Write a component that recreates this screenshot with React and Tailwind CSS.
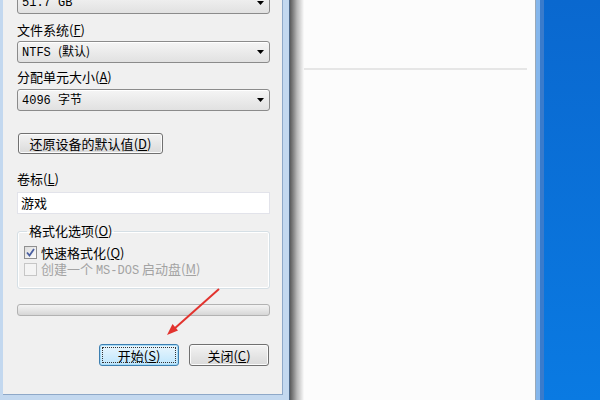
import React from "react";

const cjk = { fontFamily: '"Noto Sans CJK SC", "Liberation Sans", sans-serif' };
const mono = { fontFamily: '"Liberation Mono", "Noto Sans CJK SC", monospace' };

function Arrow() {
  return (
    <svg width="7" height="4" viewBox="0 0 7 4" className="shrink-0">
      <polygon points="0,0 7,0 3.5,4" fill="#000" />
    </svg>
  );
}

function Key({ k }) {
  return (
    <span>
      (<span className="underline">{k}</span>)
    </span>
  );
}

function Select({ children }) {
  return (
    <div className="flex items-center h-[22px] border border-[#8b8b8b] rounded-[3px] bg-linear-to-b from-[#f5f5f5] to-[#e1e1e1] pl-[4px] pr-[5px] text-[12px] text-black shadow-[inset_0_1px_0_#ffffff]">
      <span className="flex-1 leading-none" style={mono}>{children}</span>
      <Arrow />
    </div>
  );
}

function Label({ children, className }) {
  return <div className={"text-[13px] leading-[16px] text-black " + (className || "")}>{children}</div>;
}

export default function App() {
  return (
    <div className="relative w-[600px] h-[400px] overflow-hidden flex bg-[#fcfcfc]" style={cjk}>
      {/* Dialog frame */}
      <div className="w-[290px] h-full bg-[#c3d8ef] pl-[3px] pr-[6px] pb-[5px] border-r border-r-[#4d6786] shrink-0">
        <div className="h-full bg-[#f0f0f0] border-r border-b border-[#8ea8c8] pl-[14px] pr-[12px] flex flex-col">
          <div className="-mt-[8px]">
            <Select>51.7 GB</Select>
          </div>
          <Label className="mt-[8px]">文件系统<Key k="F" /></Label>
          <div className="mt-[3px]">
            <Select>
              NTFS <span style={cjk}>(默认)</span>
            </Select>
          </div>
          <Label className="mt-[6px]">分配单元大小<Key k="A" /></Label>
          <div className="mt-[4px]">
            <Select>
              4096 <span style={cjk}>字节</span>
            </Select>
          </div>

          <div className="mt-[22px] flex">
            <button className="ml-[1px] w-[145px] h-[21px] border border-[#707070] rounded-[3px] bg-linear-to-b from-[#f3f3f3] to-[#dadada] text-[13px] leading-none text-black shadow-[inset_0_0_0_1px_#fbfbfb]">
              还原设备的默认值<Key k="D" />
            </button>
          </div>

          <Label className="mt-[17px]">卷标<Key k="L" /></Label>
          <div className="mt-[5px] h-[22px] bg-white border border-[#e2e3ea] flex items-center pl-[3px] text-[13px] text-black">
            游戏
          </div>

          <fieldset className="mt-[9px] border border-[#d5dfe5] rounded-[3px] pl-[7px] pr-[2px] pb-[4px] h-[66px] shadow-[inset_0_0_0_1px_#ffffff]">
            <legend className="ml-[2px] px-[2px] text-[13px] leading-[16px] text-black">格式化选项<Key k="O" /></legend>
            <div className="flex items-center h-[17px] mt-[5px] -ml-[1px]">
              <div className="w-[13px] h-[13px] border border-[#8f8f8f] bg-linear-to-br from-[#dcdcdc] to-[#fdfdfd] flex items-center justify-center">
                <svg width="9" height="9" viewBox="0 0 9 9">
                  <path d="M1 4.5 L3.5 7.5 L8 1" stroke="#4a5fa0" strokeWidth="1.8" fill="none" />
                </svg>
              </div>
              <span className="ml-[4px] text-[13px] leading-[16px] text-black">快速格式化<Key k="Q" /></span>
            </div>
            <div className="flex items-center h-[17px] -ml-[1px]">
              <div className="w-[13px] h-[13px] border border-[#c6c6c6] bg-[#f4f4f4]" />
              <span className="ml-[4px] text-[13px] leading-[16px] text-[#a3a3a3]">
                创建一个 <span style={mono} className="text-[12px]">MS-DOS</span> 启动盘<Key k="M" />
              </span>
            </div>
          </fieldset>

          <div className="mt-[15px] h-[12px] border border-[#b2b2b2] rounded-[3px] bg-linear-to-b from-[#f3f3f3] via-[#e6e6e6] to-[#d6d6d6]" />

          <div className="mt-[28px] flex justify-end gap-[10px] pr-[1px]">
            <button className="w-[80px] h-[22px] border border-[#3c7fb1] rounded-[3px] bg-linear-to-b from-[#eaf6fd] to-[#bee6fd] shadow-[inset_0_0_0_1px_#a8dbf6] flex items-center justify-center p-[2px]">
              <span className="w-full h-full border border-dotted border-[#333] flex items-center justify-center text-[13px] leading-none text-black">
                开始<Key k="S" />
              </span>
            </button>
            <button className="w-[80px] h-[22px] border border-[#707070] rounded-[3px] bg-linear-to-b from-[#f3f3f3] to-[#dadada] shadow-[inset_0_0_0_1px_#fbfbfb] text-[13px] leading-none text-black">
              关闭<Key k="C" />
            </button>
          </div>
        </div>
      </div>

      {/* Shadow */}
      <div className="w-[14px] h-full bg-linear-to-r from-[#5a5a5a] via-[#b8b8b8] to-[#fbfbfb] shrink-0" />

      {/* Background window */}
      <div className="flex-1 h-full bg-[#fcfcfc] flex flex-col">
        <div className="mt-[68px] h-[2px] bg-[#e6e6e6] mr-[8px]" />
      </div>

      {/* Window border */}
      <div className="w-[1px] h-full bg-[#9aa9b8] shrink-0" />
      <div className="w-[4px] h-full bg-[#84b6ec] shrink-0" />
      <div className="w-[4px] h-full bg-[#3a7bcb] shrink-0" />

      {/* Desktop */}
      <div className="w-[56px] h-full bg-linear-to-b from-[#0a68cf] to-[#0a7ae2] shrink-0" />

      {/* Red arrow annotation */}
      <svg className="absolute left-0 top-0 pointer-events-none" width="600" height="400">
        <line x1="219" y1="289" x2="174" y2="329" stroke="#e2332e" strokeWidth="2" />
        <polygon points="167,335 178,330.5 172.5,324" fill="#e2332e" />
      </svg>
    </div>
  );
}
